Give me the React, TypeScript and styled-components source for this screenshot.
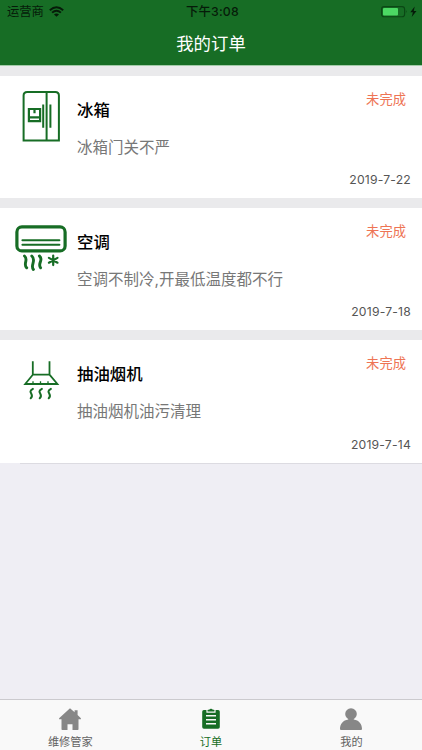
import React from 'react';
import styled, { createGlobalStyle } from 'styled-components';

const GlobalStyle = createGlobalStyle`
  * { box-sizing: border-box; }
  body {
    margin: 0;
    background: #efeef4;
    font-family: Inter, "Noto Sans CJK SC", sans-serif;
  }
`;

const GREEN = '#176d25';

const Screen = styled.div`
  width: 422px;
  height: 750px;
  display: flex;
  flex-direction: column;
  background: #efeef4;
  overflow: hidden;
`;

const Header = styled.header`
  flex: none;
  height: 66px;
  background: ${GREEN};
  border-bottom: 1px solid #a3cba9;
`;

const StatusBar = styled.div`
  display: grid;
  grid-template-columns: 1fr auto 1fr;
  align-items: center;
  height: 22px;
  padding: 0 5px 0 7px;
  color: #061b09;
  font-size: 12.3px;
  line-height: 22px;
`;

const Carrier = styled.div`
  display: flex;
  align-items: center;
  gap: 5px;
  padding-top: 1px;

  svg {
    margin-top: -2px;
  }
`;

const Clock = styled.div`
  padding: 1px 0 0 1px;
  font-weight: 500;
  letter-spacing: 0.2px;
`;

const Power = styled.div`
  display: flex;
  justify-content: flex-end;
`;

const Title = styled.h1`
  margin: 0;
  text-align: center;
  color: #fff;
  font-size: 17.4px;
  font-weight: 400;
  line-height: 44px;
`;

const List = styled.main`
  flex: 1;
  display: flex;
  flex-direction: column;
`;

const Card = styled.article`
  flex: none;
  display: grid;
  grid-template-columns: 77px 1fr auto;
  height: 132.2px;
  border-top: 10px solid #eaeaec;
  background: #fff;
`;

const IconCell = styled.div`
  height: 80px;
`;

const Details = styled.div`
  padding-top: 21px;
`;

const Name = styled.h2`
  margin: 0;
  color: #000;
  font-size: 16.4px;
  font-weight: 500;
  line-height: 26px;
`;

const Description = styled.p`
  margin: 12px 0 0;
  color: #777;
  font-size: 15.5px;
  line-height: 26px;
  white-space: nowrap;
`;

const Meta = styled.div`
  display: flex;
  flex-direction: column;
  align-items: flex-end;
  justify-content: space-between;
  padding: 13px 11px 9px 0;
`;

const Status = styled.span`
  margin-right: 5px;
  color: #ee7454;
  font-size: 13.3px;
  line-height: 20px;
`;

const DateText = styled.time`
  color: #555;
  font-size: 12.2px;
  letter-spacing: 0.2px;
  line-height: 18px;
`;

const Divider = styled.div`
  height: 1px;
  margin-left: 20px;
  background: #dcdbe1;
`;

const TabBar = styled.nav`
  flex: none;
  display: grid;
  grid-template-columns: repeat(3, 140.6px);
  height: 51px;
  border-top: 1px solid #cbcace;
  background: #f9f9f9;
`;

const Tab = styled.button<{ $active?: boolean }>`
  display: flex;
  flex-direction: column;
  align-items: center;
  padding: 7px 0 0;
  border: 0;
  background: none;
  color: ${({ $active }) => ($active ? GREEN : '#626262')};
  font-family: inherit;
  font-size: 11.2px;
  line-height: 16px;

  svg {
    flex: none;
    margin-bottom: 3px;
    color: ${({ $active }) => ($active ? GREEN : '#878787')};
  }
`;

const WifiIcon = () => (
  <svg width="15" height="11" viewBox="0 0 15 11" fill="none" stroke="currentColor" strokeWidth="1.9">
    <path d="M.8 4.2Q7.5-1.7 14.2 4.2M3.1 6.6Q7.5 2.7 11.9 6.6" />
    <path d="M5 8.4Q7.5 6.5 10 8.4L7.5 10.8Z" fill="currentColor" stroke="none" />
  </svg>
);

const BatteryIcon = () => (
  <svg width="36" height="12" viewBox="0 0 36 12" fill="none">
    <rect x=".6" y=".6" width="23" height="10.2" rx="2.6" stroke="#0b4715" strokeWidth="1.1" />
    <rect x="2" y="2" width="15" height="7.4" rx="1" fill="#4cd964" />
    <path d="M24.9 4.1q1.600 1.600 0 3.200Z" fill="#0b4715" />
    <path d="M33.700.4 29.300 6.200h2.600l-1.200 4.900 4.800-6h-2.700Z" fill="#061b09" />
  </svg>
);

const FridgeIcon = () => (
  <svg width="77" height="80" viewBox="0 0 77 80" fill="none" stroke={GREEN} strokeWidth="2">
    <path d="M23.6 64.4V19.6q0-3.600 3.600-3.600h28.100q3.600 0 3.600 3.600v44.800ZM46.600 16v48.400" />
    <path d="M43.200 28.500v23.300M50.400 28.500v23.300" />
    <path d="M28.900 33h11.200v12.200H28.900ZM28.900 41.400h11.200M34.500 33v4.200" strokeWidth="2.200" />
  </svg>
);

const AirConditionerIcon = () => (
  <svg width="77" height="80" viewBox="0 0 77 80" fill="none" stroke={GREEN} strokeLinecap="round">
    <rect x="16.900" y="18.900" width="48.200" height="24" rx="5" strokeWidth="3.200" />
    <path d="M22.400 32.200h37M22.400 36.700h37" strokeWidth="2" />
    <path
      d="M24.500 48c4.300 3.500-1.800 8.200 2.200 11.800M31.800 48c5 4.600-2 9.200 1.600 13.500M39.400 48c4.800 3.700-2.400 7.400 1.200 11.800"
      strokeWidth="2.900"
    />
    <path d="M53.200 47.500v9.600M48.900 49.900l8.600 4.800M57.500 49.900l-8.600 4.800" strokeWidth="2.200" />
  </svg>
);

const RangeHoodIcon = () => (
  <svg width="77" height="80" viewBox="0 0 77 80" fill="none" stroke={GREEN} strokeWidth="1.800">
    <path d="M32.800 21.200v13.500L25.200 44h32.200l-7.900-9.300V21.200M32.800 34.600h16.700" />
    <path d="M33 41.200v2M40.500 41.200v2M48 41.200v2" strokeWidth="1.300" />
    <path
      d="M32.900 48.900c-6.400 3.500 2.400 5-2.200 9.400M41.900 48.900c-6.400 3.500 2.400 5-2.200 9.400M50.900 48.900c-6.400 3.500 2.400 5-2.200 9.400"
      strokeLinecap="round"
      strokeWidth="2"
    />
  </svg>
);

const HomeIcon = () => (
  <svg width="24" height="24" viewBox="0 0 24 24" fill="currentColor">
    <path d="M12 1.200 16.600 5.300V3.200h3v4.900l3.300 3.200v1h-2.400v9.900q0 .8-.8.8h-5.200v-5.700h-5v5.700H4.300q-.8 0-.8-.8v-9.900H1.100v-1Z" />
  </svg>
);

const ClipboardIcon = () => (
  <svg width="24" height="24" viewBox="0 0 24 24">
    <rect x="3.200" y="3" width="17.600" height="18.700" rx="1.700" fill="currentColor" />
    <path d="M8 3v2.200h8V3" fill="none" stroke="#f9f9f9" strokeWidth="1.200" />
    <path d="M8.900 4V2.700h1.400q.2-.9 1.700-.9t1.700.9h1.400V4Z" fill="currentColor" />
    <path d="M7 8.700h10M7 12.700h10M7 16.700h10" stroke="#f9f9f9" strokeWidth="1.400" />
  </svg>
);

const ProfileIcon = () => (
  <svg width="24" height="24" viewBox="0 0 24 24" fill="currentColor">
    <circle cx="12" cy="7" r="5.800" />
    <path d="M9.300 11h5.400v1.600C20 13.300 23 17.300 23 22q0 1-1 1H2q-1 0-1-1c0-4.700 3-8.700 8.300-9.400Z" />
  </svg>
);

const orders = [
  { name: '冰箱', description: '冰箱门关不严', date: '2019-7-22', Icon: FridgeIcon },
  { name: '空调', description: '空调不制冷,开最低温度都不行', date: '2019-7-18', Icon: AirConditionerIcon },
  { name: '抽油烟机', description: '抽油烟机油污清理', date: '2019-7-14', Icon: RangeHoodIcon },
];

export default function App() {
  return (
    <Screen>
      <GlobalStyle />
      <Header>
        <StatusBar>
          <Carrier>运营商<WifiIcon /></Carrier>
          <Clock>下午3:08</Clock>
          <Power><BatteryIcon /></Power>
        </StatusBar>
        <Title>我的订单</Title>
      </Header>
      <List>
        {orders.map(({ name, description, date, Icon }) => (
          <Card key={name}>
            <IconCell><Icon /></IconCell>
            <Details>
              <Name>{name}</Name>
              <Description>{description}</Description>
            </Details>
            <Meta>
              <Status>未完成</Status>
              <DateText>{date}</DateText>
            </Meta>
          </Card>
        ))}
        <Divider />
      </List>
      <TabBar>
        <Tab><HomeIcon />维修管家</Tab>
        <Tab $active><ClipboardIcon />订单</Tab>
        <Tab><ProfileIcon />我的</Tab>
      </TabBar>
    </Screen>
  );
}
